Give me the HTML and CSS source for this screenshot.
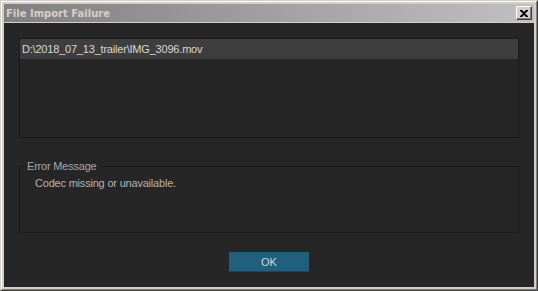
FILE: index.html
```html
<!DOCTYPE html>
<html lang="en">
<head>
	<meta charset="UTF-8">
	<title>File Import Failure</title>
	<link rel="stylesheet" href="styles.css">
</head>
<body>
	<div class="window">
		<div class="frame">
			<div class="titlebar">
				<span class="title">File Import Failure</span>
				<span class="close">
					<svg width="8" height="7" viewBox="0 0 8 7">
						<path d="M0 0h2l2 2 2-2h2v1L5 3.5 8 6v1H6L4 5 2 7H0V6l3-2.5L0 1z" fill="#000"/>
					</svg>
				</span>
			</div>
			<div class="content">
				<ul class="files">
					<li class="sel">D:\2018_07_13_trailer\IMG_3096.mov</li>
				</ul>
				<fieldset class="group">
					<legend>Error Message</legend>
					<p class="msg">Codec missing or unavailable.</p>
				</fieldset>
				<div class="buttons">
					<button class="ok">OK</button>
				</div>
			</div>
		</div>
	</div>
</body>
</html>
```

FILE: styles.css
```css
*{margin:0;padding:0;box-sizing:border-box;}
body{
	background: #d4d0c8;
	font-family: "Liberation Sans", Arial, sans-serif;
	font-size: 11px;
	letter-spacing: -0.2px;
}
.window{
	width: 538px;
	height: 291px;
	border: 1px solid;
	border-color: #d4d0c8 #404040 #404040 #d4d0c8;
}
.frame{
	height: 100%;
	border: 1px solid;
	border-color: #fff #808080 #808080 #fff;
	background: #d4d0c8;
	padding: 2px;
	display: flex;
	flex-direction: column;
}
.titlebar{
	height: 18px;
	background: linear-gradient(to right, #808080, #c0c0c0);
	display: flex;
	align-items: center;
	justify-content: space-between;
	padding: 0 2px 0 2px;
	margin-bottom: 1px;
}
.title{
	color: #d4d0c8;
	font-family: "DejaVu Sans", sans-serif;
	font-weight: bold;
	font-size: 10px;
	letter-spacing: 0;
}
.close{
	width: 16px;
	height: 14px;
	background: #d4d0c8;
	border: 1px solid;
	border-color: #fff #404040 #404040 #fff;
	box-shadow: inset -1px -1px 0 #808080;
	display: flex;
	align-items: center;
	justify-content: center;
}
.content{
	flex: 1;
	background: #262626;
	padding: 15px 15px 15px 15px;
	display: flex;
	flex-direction: column;
}
.files{
	list-style: none;
	height: 100px;
	background: #262626;
	border: 1px solid #1a1a1a;
}
.files li{
	height: 20px;
	line-height: 20px;
	padding-left: 2px;
	color: #d8d8d8;
}
.files li.sel{
	background: #3e3e3e;
}
.group{
	margin-top: 21px;
	height: 74px;
	border: 1px solid #1a1a1a;
	padding: 0;
}
.group legend{
	margin-left: 4px;
	padding: 0 4px 0 3px;
	color: #a8a8a8;
	line-height: 14px;
}
.msg{
	color: #b4b4b4;
	margin-top: 4px;
	padding-left: 15px;
}
.buttons{
	margin-top: auto;
	display: flex;
	justify-content: center;
}
.ok{
	width: 80px;
	height: 20px;
	background: #1f5f80;
	border: none;
	border-bottom: 1px solid #174860;
	color: #d8d8d8;
	font-family: "Liberation Sans", Arial, sans-serif;
	font-size: 11px;
}
```
